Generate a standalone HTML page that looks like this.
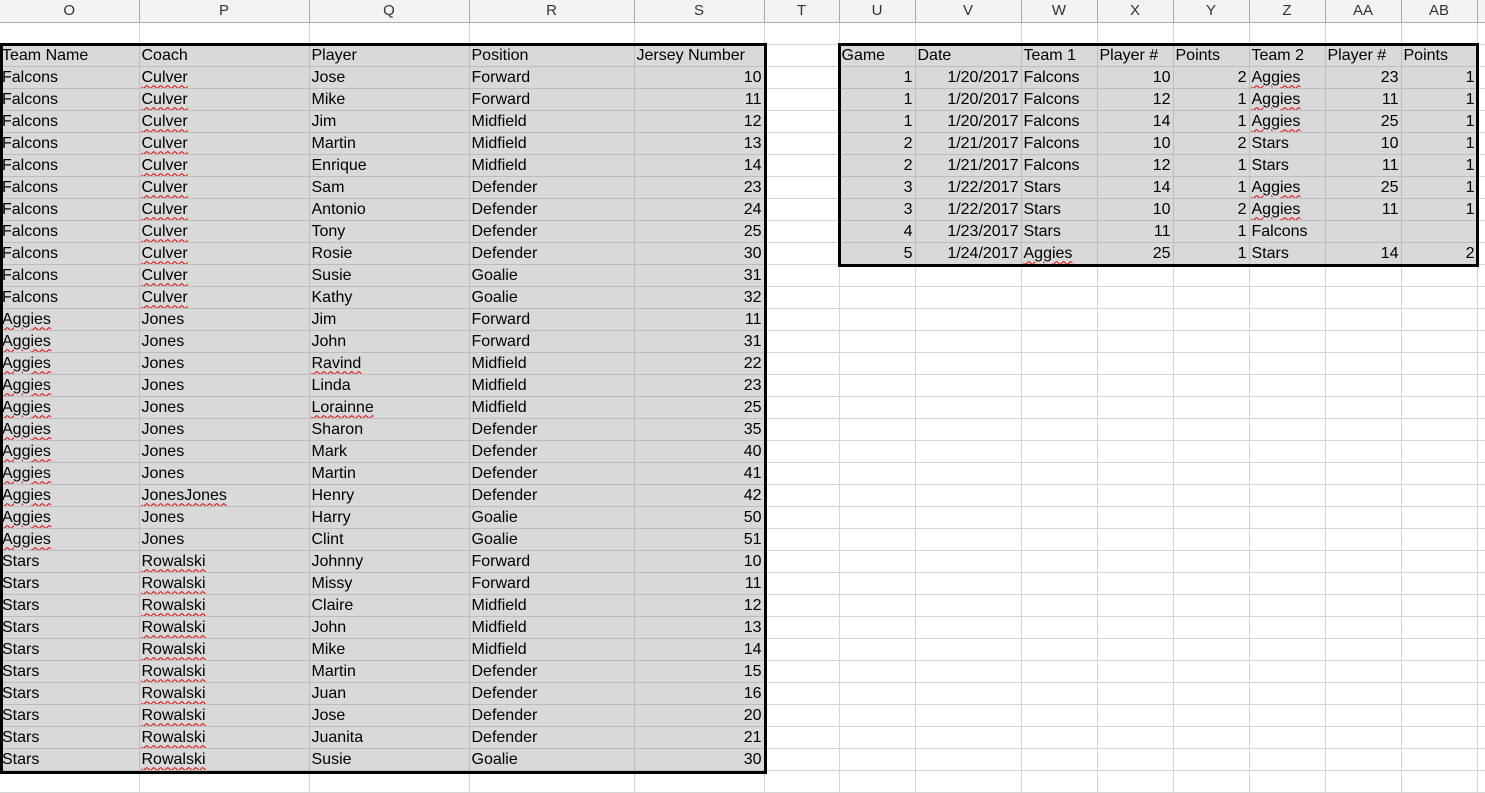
<!DOCTYPE html>
<html><head><meta charset="utf-8"><style>
body{margin:0;width:1485px;height:780px;overflow:hidden;background:#fff;position:relative}
table{border-collapse:collapse;table-layout:fixed;position:absolute;left:0;top:0;width:1497px}
td{height:22px;border-right:1px solid #d4d4d4;border-bottom:1px solid #d4d4d4;padding:0 0 0 2px;white-space:nowrap;overflow:hidden;font:16px "Liberation Sans",sans-serif;line-height:21px;color:#000;box-sizing:border-box}
td.g{background:#d9d9d9;border-color:#bdbdbd}
td.n{text-align:right;padding:0 2px 0 0}
tr.h td{background:#f3f3f3;text-align:center;color:#333;border-right-color:#ababab;border-bottom:1px solid #ababab;padding:0;font-size:15px}
u{text-decoration:underline wavy #e00000;text-decoration-thickness:1px;text-underline-offset:3px}
.b{position:absolute;border:3px solid #000;box-sizing:border-box}
</style></head><body>
<table>
<colgroup><col style="width:139px"><col style="width:170px"><col style="width:160px"><col style="width:165px"><col style="width:130px"><col style="width:75px"><col style="width:76px"><col style="width:106px"><col style="width:76px"><col style="width:76px"><col style="width:76px"><col style="width:76px"><col style="width:76px"><col style="width:76px"><col style="width:20px"></colgroup>
<tr class="h"><td>O</td><td>P</td><td>Q</td><td>R</td><td>S</td><td>T</td><td>U</td><td>V</td><td>W</td><td>X</td><td>Y</td><td>Z</td><td>AA</td><td>AB</td><td></td></tr>
<tr><td></td><td></td><td></td><td></td><td></td><td></td><td></td><td></td><td></td><td></td><td></td><td></td><td></td><td></td><td></td></tr>
<tr><td class="g">Team Name</td><td class="g">Coach</td><td class="g">Player</td><td class="g">Position</td><td class="g">Jersey Number</td><td></td><td class="g">Game</td><td class="g">Date</td><td class="g">Team 1</td><td class="g">Player #</td><td class="g">Points</td><td class="g">Team 2</td><td class="g">Player #</td><td class="g">Points</td><td></td></tr>
<tr><td class="g">Falcons</td><td class="g"><u>Culver</u></td><td class="g">Jose</td><td class="g">Forward</td><td class="g n">10</td><td></td><td class="g n">1</td><td class="g n">1/20/2017</td><td class="g">Falcons</td><td class="g n">10</td><td class="g n">2</td><td class="g"><u>Aggies</u></td><td class="g n">23</td><td class="g n">1</td><td></td></tr>
<tr><td class="g">Falcons</td><td class="g"><u>Culver</u></td><td class="g">Mike</td><td class="g">Forward</td><td class="g n">11</td><td></td><td class="g n">1</td><td class="g n">1/20/2017</td><td class="g">Falcons</td><td class="g n">12</td><td class="g n">1</td><td class="g"><u>Aggies</u></td><td class="g n">11</td><td class="g n">1</td><td></td></tr>
<tr><td class="g">Falcons</td><td class="g"><u>Culver</u></td><td class="g">Jim</td><td class="g">Midfield</td><td class="g n">12</td><td></td><td class="g n">1</td><td class="g n">1/20/2017</td><td class="g">Falcons</td><td class="g n">14</td><td class="g n">1</td><td class="g"><u>Aggies</u></td><td class="g n">25</td><td class="g n">1</td><td></td></tr>
<tr><td class="g">Falcons</td><td class="g"><u>Culver</u></td><td class="g">Martin</td><td class="g">Midfield</td><td class="g n">13</td><td></td><td class="g n">2</td><td class="g n">1/21/2017</td><td class="g">Falcons</td><td class="g n">10</td><td class="g n">2</td><td class="g">Stars</td><td class="g n">10</td><td class="g n">1</td><td></td></tr>
<tr><td class="g">Falcons</td><td class="g"><u>Culver</u></td><td class="g">Enrique</td><td class="g">Midfield</td><td class="g n">14</td><td></td><td class="g n">2</td><td class="g n">1/21/2017</td><td class="g">Falcons</td><td class="g n">12</td><td class="g n">1</td><td class="g">Stars</td><td class="g n">11</td><td class="g n">1</td><td></td></tr>
<tr><td class="g">Falcons</td><td class="g"><u>Culver</u></td><td class="g">Sam</td><td class="g">Defender</td><td class="g n">23</td><td></td><td class="g n">3</td><td class="g n">1/22/2017</td><td class="g">Stars</td><td class="g n">14</td><td class="g n">1</td><td class="g"><u>Aggies</u></td><td class="g n">25</td><td class="g n">1</td><td></td></tr>
<tr><td class="g">Falcons</td><td class="g"><u>Culver</u></td><td class="g">Antonio</td><td class="g">Defender</td><td class="g n">24</td><td></td><td class="g n">3</td><td class="g n">1/22/2017</td><td class="g">Stars</td><td class="g n">10</td><td class="g n">2</td><td class="g"><u>Aggies</u></td><td class="g n">11</td><td class="g n">1</td><td></td></tr>
<tr><td class="g">Falcons</td><td class="g"><u>Culver</u></td><td class="g">Tony</td><td class="g">Defender</td><td class="g n">25</td><td></td><td class="g n">4</td><td class="g n">1/23/2017</td><td class="g">Stars</td><td class="g n">11</td><td class="g n">1</td><td class="g">Falcons</td><td class="g n"></td><td class="g n"></td><td></td></tr>
<tr><td class="g">Falcons</td><td class="g"><u>Culver</u></td><td class="g">Rosie</td><td class="g">Defender</td><td class="g n">30</td><td></td><td class="g n">5</td><td class="g n">1/24/2017</td><td class="g"><u>Aggies</u></td><td class="g n">25</td><td class="g n">1</td><td class="g">Stars</td><td class="g n">14</td><td class="g n">2</td><td></td></tr>
<tr><td class="g">Falcons</td><td class="g"><u>Culver</u></td><td class="g">Susie</td><td class="g">Goalie</td><td class="g n">31</td><td></td><td></td><td></td><td></td><td></td><td></td><td></td><td></td><td></td><td></td></tr>
<tr><td class="g">Falcons</td><td class="g"><u>Culver</u></td><td class="g">Kathy</td><td class="g">Goalie</td><td class="g n">32</td><td></td><td></td><td></td><td></td><td></td><td></td><td></td><td></td><td></td><td></td></tr>
<tr><td class="g"><u>Aggies</u></td><td class="g">Jones</td><td class="g">Jim</td><td class="g">Forward</td><td class="g n">11</td><td></td><td></td><td></td><td></td><td></td><td></td><td></td><td></td><td></td><td></td></tr>
<tr><td class="g"><u>Aggies</u></td><td class="g">Jones</td><td class="g">John</td><td class="g">Forward</td><td class="g n">31</td><td></td><td></td><td></td><td></td><td></td><td></td><td></td><td></td><td></td><td></td></tr>
<tr><td class="g"><u>Aggies</u></td><td class="g">Jones</td><td class="g"><u>Ravind</u></td><td class="g">Midfield</td><td class="g n">22</td><td></td><td></td><td></td><td></td><td></td><td></td><td></td><td></td><td></td><td></td></tr>
<tr><td class="g"><u>Aggies</u></td><td class="g">Jones</td><td class="g">Linda</td><td class="g">Midfield</td><td class="g n">23</td><td></td><td></td><td></td><td></td><td></td><td></td><td></td><td></td><td></td><td></td></tr>
<tr><td class="g"><u>Aggies</u></td><td class="g">Jones</td><td class="g"><u>Lorainne</u></td><td class="g">Midfield</td><td class="g n">25</td><td></td><td></td><td></td><td></td><td></td><td></td><td></td><td></td><td></td><td></td></tr>
<tr><td class="g"><u>Aggies</u></td><td class="g">Jones</td><td class="g">Sharon</td><td class="g">Defender</td><td class="g n">35</td><td></td><td></td><td></td><td></td><td></td><td></td><td></td><td></td><td></td><td></td></tr>
<tr><td class="g"><u>Aggies</u></td><td class="g">Jones</td><td class="g">Mark</td><td class="g">Defender</td><td class="g n">40</td><td></td><td></td><td></td><td></td><td></td><td></td><td></td><td></td><td></td><td></td></tr>
<tr><td class="g"><u>Aggies</u></td><td class="g">Jones</td><td class="g">Martin</td><td class="g">Defender</td><td class="g n">41</td><td></td><td></td><td></td><td></td><td></td><td></td><td></td><td></td><td></td><td></td></tr>
<tr><td class="g"><u>Aggies</u></td><td class="g"><u>JonesJones</u></td><td class="g">Henry</td><td class="g">Defender</td><td class="g n">42</td><td></td><td></td><td></td><td></td><td></td><td></td><td></td><td></td><td></td><td></td></tr>
<tr><td class="g"><u>Aggies</u></td><td class="g">Jones</td><td class="g">Harry</td><td class="g">Goalie</td><td class="g n">50</td><td></td><td></td><td></td><td></td><td></td><td></td><td></td><td></td><td></td><td></td></tr>
<tr><td class="g"><u>Aggies</u></td><td class="g">Jones</td><td class="g">Clint</td><td class="g">Goalie</td><td class="g n">51</td><td></td><td></td><td></td><td></td><td></td><td></td><td></td><td></td><td></td><td></td></tr>
<tr><td class="g">Stars</td><td class="g"><u>Rowalski</u></td><td class="g">Johnny</td><td class="g">Forward</td><td class="g n">10</td><td></td><td></td><td></td><td></td><td></td><td></td><td></td><td></td><td></td><td></td></tr>
<tr><td class="g">Stars</td><td class="g"><u>Rowalski</u></td><td class="g">Missy</td><td class="g">Forward</td><td class="g n">11</td><td></td><td></td><td></td><td></td><td></td><td></td><td></td><td></td><td></td><td></td></tr>
<tr><td class="g">Stars</td><td class="g"><u>Rowalski</u></td><td class="g">Claire</td><td class="g">Midfield</td><td class="g n">12</td><td></td><td></td><td></td><td></td><td></td><td></td><td></td><td></td><td></td><td></td></tr>
<tr><td class="g">Stars</td><td class="g"><u>Rowalski</u></td><td class="g">John</td><td class="g">Midfield</td><td class="g n">13</td><td></td><td></td><td></td><td></td><td></td><td></td><td></td><td></td><td></td><td></td></tr>
<tr><td class="g">Stars</td><td class="g"><u>Rowalski</u></td><td class="g">Mike</td><td class="g">Midfield</td><td class="g n">14</td><td></td><td></td><td></td><td></td><td></td><td></td><td></td><td></td><td></td><td></td></tr>
<tr><td class="g">Stars</td><td class="g"><u>Rowalski</u></td><td class="g">Martin</td><td class="g">Defender</td><td class="g n">15</td><td></td><td></td><td></td><td></td><td></td><td></td><td></td><td></td><td></td><td></td></tr>
<tr><td class="g">Stars</td><td class="g"><u>Rowalski</u></td><td class="g">Juan</td><td class="g">Defender</td><td class="g n">16</td><td></td><td></td><td></td><td></td><td></td><td></td><td></td><td></td><td></td><td></td></tr>
<tr><td class="g">Stars</td><td class="g"><u>Rowalski</u></td><td class="g">Jose</td><td class="g">Defender</td><td class="g n">20</td><td></td><td></td><td></td><td></td><td></td><td></td><td></td><td></td><td></td><td></td></tr>
<tr><td class="g">Stars</td><td class="g"><u>Rowalski</u></td><td class="g">Juanita</td><td class="g">Defender</td><td class="g n">21</td><td></td><td></td><td></td><td></td><td></td><td></td><td></td><td></td><td></td><td></td></tr>
<tr><td class="g">Stars</td><td class="g"><u>Rowalski</u></td><td class="g">Susie</td><td class="g">Goalie</td><td class="g n">30</td><td></td><td></td><td></td><td></td><td></td><td></td><td></td><td></td><td></td><td></td></tr>
<tr><td></td><td></td><td></td><td></td><td></td><td></td><td></td><td></td><td></td><td></td><td></td><td></td><td></td><td></td><td></td></tr>
</table>
<div class="b" style="left:0;top:43px;width:767px;height:731px"></div>
<div class="b" style="left:838px;top:43px;width:641px;height:224px"></div>
</body></html>
